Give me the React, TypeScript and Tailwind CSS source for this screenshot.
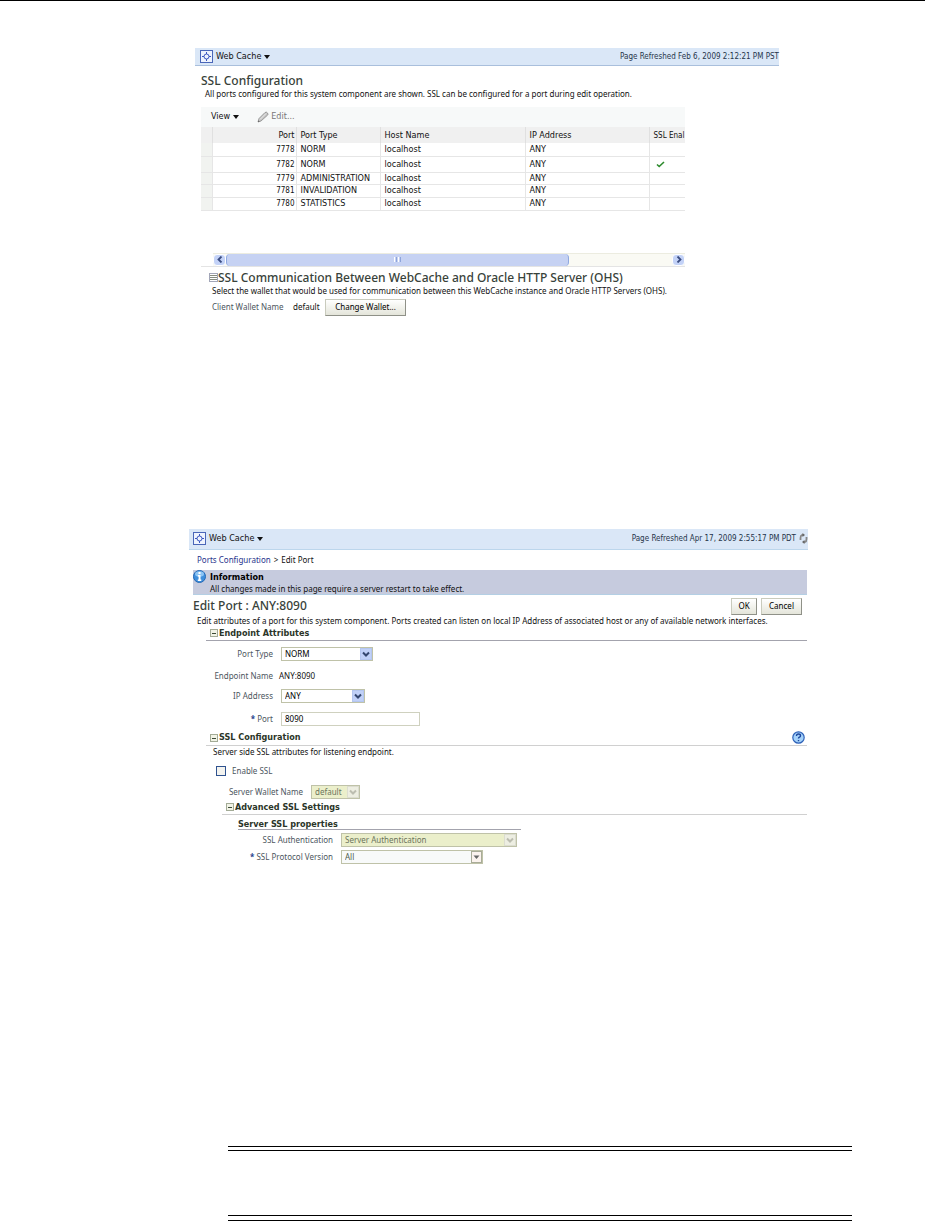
import React from 'react';

interface PortRow {
  port: string;
  type: string;
  host: string;
  ip: string;
  ssl: boolean;
  height: string;
}

const ports: PortRow[] = [
  { port: '7778', type: 'NORM', host: 'localhost', ip: 'ANY', ssl: false, height: 'h-[13px]' },
  { port: '7782', type: 'NORM', host: 'localhost', ip: 'ANY', ssl: true, height: 'h-[16px]' },
  { port: '7779', type: 'ADMINISTRATION', host: 'localhost', ip: 'ANY', ssl: false, height: 'h-[12px]' },
  { port: '7781', type: 'INVALIDATION', host: 'localhost', ip: 'ANY', ssl: false, height: 'h-[13px]' },
  { port: '7780', type: 'STATISTICS', host: 'localhost', ip: 'ANY', ssl: false, height: 'h-[13px]' },
];

function CacheIcon() {
  return (
    <svg width="13" height="13" viewBox="0 0 13 13" fill="none" className="shrink-0">
      <rect x="0.5" y="0.5" width="12" height="12" fill="#eef3fd" stroke="#4a66b8" />
      <circle cx="6.5" cy="6.5" r="2.5" stroke="#3a56c0" />
      <path d="M6.5 2v2M6.5 9v2M2 6.5h2M9 6.5h2" stroke="#3a56c0" />
    </svg>
  );
}

function Caret() {
  return (
    <svg width="6" height="4" viewBox="0 0 6 4" className="shrink-0">
      <path d="M0 0h6L3 4z" fill="#111" />
    </svg>
  );
}

function PencilIcon() {
  return (
    <svg width="12" height="12" viewBox="0 0 12 12" fill="none" className="shrink-0">
      <path d="M1 11l1-3.500L8 1.500q1.500-1 2.500.5t0 2.200L4 10z" fill="#c4c4c4" stroke="#8a8a8a" strokeWidth="0.8" />
      <path d="M3 8.500L9 2.500" stroke="#f4f4f4" strokeWidth="0.8" />
      <path d="M1 11l.5-1.500 1 1z" fill="#555" />
    </svg>
  );
}

function CheckIcon() {
  return (
    <svg width="9" height="7" viewBox="0 0 9 7" fill="none">
      <path d="M1 3.500l2.200 2L8 1" stroke="#2c8a2c" strokeWidth="1.600" />
    </svg>
  );
}

function InfoIcon() {
  return (
    <svg width="13" height="13" viewBox="0 0 13 13" className="shrink-0">
      <circle cx="6.500" cy="6.500" r="6" fill="#3f8fdc" stroke="#2468b4" />
      <ellipse cx="6.500" cy="4" rx="4.500" ry="2.800" fill="#8cc4f4" />
      <path d="M5.500 2h2v2h-2zM4.800 5h2.700v4.500h.8V11H4.800V9.500h.8v-3h-.8z" fill="#fff" />
    </svg>
  );
}

function HelpIcon() {
  return (
    <svg width="13" height="13" viewBox="0 0 13 13" fill="none">
      <circle cx="6.500" cy="6.500" r="5.700" fill="#a4d2fa" stroke="#2f62b8" strokeWidth="1.200" />
      <path d="M4.500 5q0-2 2-2t2 1.700q0 1-1 1.500t-1 1.300M6.500 9v1.300" stroke="#1f479c" strokeWidth="1.400" />
    </svg>
  );
}

function RefreshIcon() {
  return (
    <svg width="9" height="11" viewBox="0 0 9 11" fill="none">
      <path d="M4 2H3Q1.500 2.500 1.500 5v2M5 9h1Q7.500 8.500 7.500 6V4" stroke="#888" strokeWidth="1.800" />
      <path d="M3.500 0v4L6 2zM5.500 11V7L3 9z" fill="#666" />
    </svg>
  );
}

function CollapseIcon() {
  return (
    <svg width="9" height="9" viewBox="0 0 9 9" className="shrink-0">
      <rect x="0.500" y="0.500" width="7" height="7" fill="#f1f3e6" stroke="#a3ab96" />
      <path d="M2 4.500h4" stroke="#3c4a36" />
    </svg>
  );
}

function FocusedCollapseIcon() {
  return (
    <svg width="9" height="9" viewBox="0 0 9 9" fill="none" className="shrink-0">
      <rect x="0.500" y="0.500" width="8" height="8" stroke="#444c70" strokeDasharray="1 1" />
      <path d="M1 2.500h7M1 4.500h7M1 6.500h7" stroke="#68705f" strokeWidth="0.800" />
    </svg>
  );
}

function HeaderBar({ refreshed, className, children }: { refreshed: string; className: string; children?: React.ReactNode }) {
  return (
    <header className={`flex items-center justify-between border-b bg-[#dae7f7] font-['DejaVu_Sans_Condensed'] ${className}`}>
      <button className="flex items-center gap-[3px] text-[9px]">
        <CacheIcon />
        <span>Web Cache</span>
        <Caret />
      </button>
      <div className="flex items-center gap-[3px] text-[#26354a]">
        <span>{refreshed}</span>
        {children}
      </div>
    </header>
  );
}

function PushButton({ children, className }: { children: React.ReactNode; className: string }) {
  return (
    <button
      className={`h-[17px] border border-[#c9cbbd] border-r-[#8f9188] border-b-[#8f9188] bg-linear-to-b from-white to-[#e4e5da] text-center text-black ${className}`}
    >
      {children}
    </button>
  );
}

function DropDown({ id, value, width, disabled }: { id: string; value: string; width: string; disabled?: boolean }) {
  return (
    <div className={`relative h-[14px] ${width}`}>
      <select
        id={id}
        disabled={disabled}
        defaultValue={value}
        className="block h-full w-full appearance-none border border-[#bfc2a8] bg-white pl-[3px] leading-3 text-black opacity-100 disabled:bg-[#ebefcb] disabled:text-[#6c755c]"
      >
        <option>{value}</option>
      </select>
      <svg width="12" height="12" viewBox="0 0 12 12" fill="none" className="pointer-events-none absolute top-px right-px">
        <rect x="0.500" y="0.500" width="11" height="11" fill={disabled ? '#edeee2' : '#c0d0f8'} stroke={disabled ? '#dcddd0' : '#b4c6f0'} />
        <path d="M3 4.500l3 3 3-3" stroke={disabled ? '#bcbdb0' : '#33466f'} strokeWidth="2" />
      </svg>
    </div>
  );
}

function SectionTitle({ title, className, children }: { title: string; className: string; children?: React.ReactNode }) {
  return (
    <div className={`flex items-center justify-between border-b pl-1 ${className}`}>
      <h3 className="flex items-center pt-px font-['DejaVu_Sans_Condensed'] text-[9px] font-bold text-[#2b3528]">
        <CollapseIcon />
        {title}
      </h3>
      {children}
    </div>
  );
}

function SslOverview() {
  return (
    <section className="ml-[195px] mr-[146px]">
      <HeaderBar refreshed="Page Refreshed Feb 6, 2009 2:12:21 PM PST" className="h-[18px] border-[#a9bfdc] pl-[5px]" />
      <div className="mr-[94px] pl-[6px]">
        <h1 className="mt-2 text-[12px] leading-[14px] font-medium text-[#38423a]">SSL Configuration</h1>
        <p className="pl-1 leading-3 whitespace-nowrap">
          All ports configured for this system component are shown. SSL can be configured for a port during edit operation.
        </p>

        <div className="mt-[7px] flex h-5 items-center gap-[18px] bg-[#f7f9f9] pl-[10px] font-['DejaVu_Sans_Condensed'] text-[9px]">
          <button className="flex items-center gap-[3px]">
            View
            <Caret />
          </button>
          <button className="flex items-center gap-[2px] text-[#777]">
            <PencilIcon />
            Edit...
          </button>
        </div>

        <table className="w-full table-fixed border-collapse font-['DejaVu_Sans_Condensed'] text-[9px] leading-[11px]">
          <colgroup>
            <col className="w-[11px]" />
            <col className="w-[84px]" />
            <col className="w-[84px]" />
            <col className="w-[145px]" />
            <col className="w-[124px]" />
            <col />
          </colgroup>
          <thead>
            <tr className="h-4 bg-[#f0f0f0] text-left">
              <th className="border-r border-[#e0e0e0]" />
              <th className="border-r border-[#e0e0e0] pr-px text-right font-normal">Port</th>
              <th className="border-r border-[#e0e0e0] pl-1 font-normal">Port Type</th>
              <th className="border-r border-[#e0e0e0] pl-1 font-normal">Host Name</th>
              <th className="border-r border-[#e0e0e0] pl-1 font-normal">IP Address</th>
              <th className="pl-1 text-[8px] font-normal whitespace-nowrap">SSL Enal</th>
            </tr>
          </thead>
          <tbody>
            {ports.map((row) => (
              <tr key={row.port} className={`border-b border-[#e6e6e6] ${row.height}`}>
                <td className="border-r border-[#e6e6e6] bg-[#f1f3f0]" />
                <td className="border-r border-[#e6e6e6] pr-px text-right text-[8px]">{row.port}</td>
                <td className="border-r border-[#e6e6e6] pl-1">{row.type}</td>
                <td className="border-r border-[#e6e6e6] pl-1">{row.host}</td>
                <td className="border-r border-[#e6e6e6] pl-1">{row.ip}</td>
                <td className="pl-[6px]">{row.ssl && <CheckIcon />}</td>
              </tr>
            ))}
          </tbody>
        </table>

        {/* horizontal scroll bar */}
        <div className="mt-[42px] border-b border-[#e4e4e4] pl-3">
          <div className="flex h-[13px] items-stretch border-t border-[#ecece0] bg-[#fafaf4]">
            <button aria-label="Scroll left" className="flex w-[13px] items-center justify-center rounded-sm border border-white bg-[#c3d2f7]">
              <svg width="6" height="7" viewBox="0 0 6 7" fill="none">
                <path d="M4.500 .5l-3 3 3 3" stroke="#3a4c80" strokeWidth="1.800" />
              </svg>
            </button>
            <div className="flex flex-1">
              <div className="flex w-[77%] items-center justify-center gap-px rounded-sm border-x border-[#8fa8e0] bg-[#c6d2f3]">
                <span className="h-[5px] w-px bg-white" />
                <span className="h-[5px] w-px bg-[#8ea5dc]" />
                <span className="h-[5px] w-px bg-white" />
                <span className="h-[5px] w-px bg-[#8ea5dc]" />
              </div>
            </div>
            <button aria-label="Scroll right" className="flex w-[13px] items-center justify-center rounded-sm border border-white bg-[#c3d2f7]">
              <svg width="6" height="7" viewBox="0 0 6 7" fill="none">
                <path d="M1.500 .5l3 3-3 3" stroke="#3a4c80" strokeWidth="1.800" />
              </svg>
            </button>
          </div>
        </div>

        <h2 className="mt-1 flex items-center pl-2 text-[12px] leading-[14px] font-medium whitespace-nowrap text-[#38423a]">
          <FocusedCollapseIcon />
          SSL Communication Between WebCache and Oracle HTTP Server (OHS)
        </h2>
        <p className="pl-[11px] leading-3 whitespace-nowrap">
          Select the wallet that would be used for communication between this WebCache instance and Oracle HTTP Servers (OHS).
        </p>
        <div className="mt-[2px] flex items-center pl-[11px]">
          <span className="w-[81px] text-[#4c565e]">Client Wallet Name</span>
          <span className="w-8">default</span>
          <PushButton className="w-[81px]">Change Wallet...</PushButton>
        </div>
      </div>
    </section>
  );
}

function EditPort() {
  return (
    <section className="mt-[213px] ml-[189px] mr-[117px]">
      <HeaderBar refreshed="Page Refreshed Apr 17, 2009 2:55:17 PM PDT" className="h-[21px] border-[#bcd6ec] pl-1">
        <button aria-label="Refresh">
          <RefreshIcon />
        </button>
      </HeaderBar>
      <div className="mr-px pl-1">
        <nav className="flex h-5 items-center gap-[3px] pl-1">
          <a href="#ports" className="text-[#26348c]">Ports Configuration</a>
          <span>&gt;</span>
          <span>Edit Port</span>
        </nav>

        <div className="flex h-[25px] gap-1 border-b border-[#b4cfe4] bg-[#c6cbde]">
          <InfoIcon />
          <div className="pt-[2px] leading-[11px]">
            <p className="font-['DejaVu_Sans_Condensed'] text-[9px] font-bold text-black">Information</p>
            <p>All changes made in this page require a server restart to take effect.</p>
          </div>
        </div>

        <div className="mt-[3px] flex items-center justify-between pr-[5px]">
          <h1 className="text-[12px] leading-[14px] font-medium text-[#38423a]">Edit Port : ANY:8090</h1>
          <div className="flex gap-1">
            <PushButton className="w-[26px]">OK</PushButton>
            <PushButton className="w-[41px]">Cancel</PushButton>
          </div>
        </div>
        <p className="pl-1 leading-3 whitespace-nowrap">
          Edit attributes of a port for this system component. Ports created can listen on local IP Address of associated host or any of available network interfaces.
        </p>

        <div className="pl-[13px]">
          <SectionTitle title="Endpoint Attributes" className="h-[14px] border-[#a3a3ad]" />
          <div className="mt-[6px] flex h-[14px] items-center gap-2">
            <label htmlFor="portType" className="w-[67px] text-right text-[#4c565e]">Port Type</label>
            <DropDown id="portType" value="NORM" width="w-[92px]" />
          </div>
          <div className="mt-2 flex h-[14px] items-center gap-[6px]">
            <span className="w-[67px] text-right whitespace-nowrap text-[#4c565e]">Endpoint Name</span>
            <span>ANY:8090</span>
          </div>
          <div className="mt-[6px] flex h-[14px] items-center gap-2">
            <label htmlFor="ipAddress" className="w-[67px] text-right text-[#4c565e]">IP Address</label>
            <DropDown id="ipAddress" value="ANY" width="w-[84px]" />
          </div>
          <div className="mt-[9px] flex h-[14px] items-center gap-2">
            <label htmlFor="port" className="w-[67px] text-right text-[#4c565e]">
              <b className="text-[#24418c]">*</b> Port
            </label>
            <input id="port" defaultValue="8090" className="h-[14px] w-[139px] border border-[#cfd1bf] bg-white pl-[3px] text-black" />
          </div>

          <SectionTitle title="SSL Configuration" className="mt-[5px] h-[15px] border-[#d0d0d0]">
            <button aria-label="Help" className="mr-[2px]">
              <HelpIcon />
            </button>
          </SectionTitle>
          <p className="pl-[7px] leading-3">Server side SSL attributes for listening endpoint.</p>
          <div className="mt-[6px] flex h-[14px] items-center gap-[6px] pl-[10px]">
            <input id="enableSsl" type="checkbox" className="h-[10px] w-[10px] appearance-none border border-[#2f528f] bg-[#f3f3ef] checked:bg-[#2f528f]" />
            <label htmlFor="enableSsl" className="text-[#4c565e]">Enable SSL</label>
          </div>
          <div className="mt-[7px] flex h-[14px] items-center gap-2 pl-[22px]">
            <label htmlFor="wallet" className="w-[75px] text-right whitespace-nowrap text-[#4c565e]">Server Wallet Name</label>
            <DropDown id="wallet" value="default" width="w-[49px]" disabled />
          </div>

          <div className="pl-4">
            <SectionTitle title="Advanced SSL Settings" className="mt-[2px] h-[14px] border-[#d0d0d0]" />
            <div className="pl-4">
              <h4 className="mt-[2px] h-[13px] w-[283px] border-b border-[#a3a3ad] font-['DejaVu_Sans_Condensed'] text-[9px] leading-[14px] font-bold text-[#2b3528]">
                Server SSL properties
              </h4>
              <div className="mt-[3px] flex h-[14px] items-center gap-2">
                <label htmlFor="sslAuth" className="w-[95px] text-right text-[#4c565e]">SSL Authentication</label>
                <DropDown id="sslAuth" value="Server Authentication" width="w-[176px]" disabled />
              </div>
              <div className="mt-[3px] flex h-[14px] items-center gap-2">
                <label htmlFor="sslProtocol" className="w-[95px] text-right whitespace-nowrap text-[#4c565e]">
                  <b className="text-[#24418c]">*</b> SSL Protocol Version
                </label>
                <div className="relative h-[14px] w-[142px]">
                  <select
                    id="sslProtocol"
                    className="block h-full w-full appearance-none border border-[#bfc2a8] bg-[#f8fafa] pl-[3px] leading-3 text-[#4d5a4d]"
                  >
                    <option>All</option>
                  </select>
                  <svg width="11" height="12" viewBox="0 0 11 12" className="pointer-events-none absolute top-px right-px">
                    <rect x="0.500" y="0.500" width="10" height="11" fill="#fbf3ee" stroke="#a9ac98" />
                    <path d="M2.500 4.500h6l-3 3.500z" fill="#666" />
                  </svg>
                </div>
              </div>
            </div>
          </div>
        </div>
      </div>
    </section>
  );
}

export default function App() {
  return (
    <main className="border-t border-black bg-white pt-[47px] font-['Noto_Sans',sans-serif] text-[8px] text-[#111]">
      <SslOverview />
      <EditPort />
      <div className="mt-[282px] mr-[73px] ml-[228px]">
        <div className="h-[5px] border-y border-black" />
        <div className="mt-16 h-[6px] border-y border-black" />
      </div>
    </main>
  );
}
